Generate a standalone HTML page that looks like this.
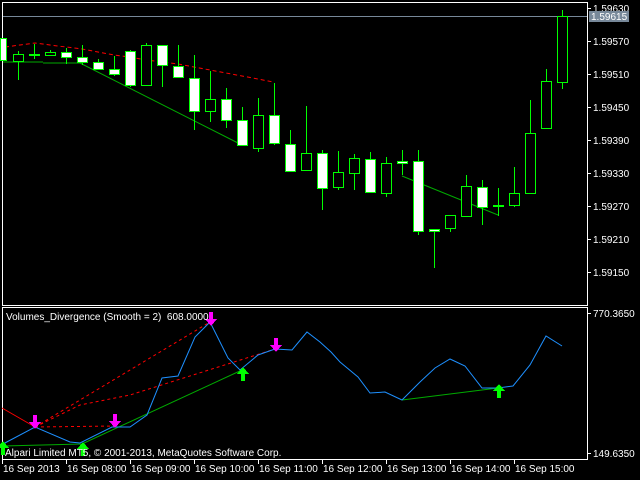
<!DOCTYPE html>
<html><head><meta charset="utf-8"><style>
html,body{margin:0;padding:0;background:#000;width:640px;height:480px;overflow:hidden}
svg{display:block}
text{font-family:"Liberation Sans",sans-serif;font-size:10px;fill:#fff}
</style></head><body>
<svg width="640" height="480" viewBox="0 0 640 480" xmlns="http://www.w3.org/2000/svg" shape-rendering="crispEdges">
<rect width="640" height="480" fill="#000"/>
<path d="M2.5 2.5H587.5V305.5H2.5Z M2.5 307.5H587.5V459.5H2.5Z" fill="none" stroke="#fff"/>
<line x1="3" y1="16.5" x2="587" y2="16.5" stroke="#778899"/>
<path d="M5 47 L20 45 L35 43 L50 45 L66 47 L82 49 L98 52 L114 55 L130 57 L146 60 L162 62 L178 64 L194 67 L210 70 L226 73 L242 76 L258 79 L273 82" fill="none" stroke="#f00" stroke-dasharray="4,3" shape-rendering="auto"/>
<path d="M3 62 L43 62 M43 63 L80 63 L238 143 M402 176 L498 215" fill="none" stroke="#0a0" shape-rendering="auto"/>
<g stroke="#00ff00" stroke-width="1">
<path d="M18.5 51V80 M34.5 44V59 M50.5 50V56 M66.5 48V64 M82.5 45V65 M98.5 59V62 M114.5 56V76 M130.5 50V87 M146.5 43V45 M162.5 45V87 M178.5 45V66 M194.5 55V130 M210.5 71V122 M226.5 88V128 M242.5 107V120 M258.5 98V152 M274.5 83V145 M290.5 130V144 M306.5 106V153 M322.5 150V210 M338.5 151V190 M354.5 154V190 M370.5 152V193 M386.5 157V197 M402.5 150V175 M418.5 150V235 M434.5 229V268 M450.5 228V232 M466.5 175V186 M482.5 180V225 M498.5 188V216 M514.5 167V207 M530.5 100V133 M546.5 69V81 M562.5 10V89"/>
</g>
<g stroke="#00ff00" stroke-width="1">
<rect x="0.5" y="38.5" width="6" height="22" fill="#fff"/>
<rect x="13.5" y="54.5" width="10" height="7" fill="#000"/>
<rect x="29.5" y="54.5" width="10" height="1" fill="#0f0"/>
<rect x="45.5" y="52.5" width="10" height="3" fill="#000"/>
<rect x="61.5" y="52.5" width="10" height="5" fill="#fff"/>
<rect x="77.5" y="57.5" width="10" height="5" fill="#fff"/>
<rect x="93.5" y="62.5" width="10" height="7" fill="#fff"/>
<rect x="109.5" y="69.5" width="10" height="5" fill="#fff"/>
<rect x="125.5" y="51.5" width="10" height="34" fill="#fff"/>
<rect x="141.5" y="45.5" width="10" height="40" fill="#000"/>
<rect x="157.5" y="45.5" width="10" height="20" fill="#fff"/>
<rect x="173.5" y="66.5" width="10" height="11" fill="#fff"/>
<rect x="189.5" y="78.5" width="10" height="33" fill="#fff"/>
<rect x="205.5" y="99.5" width="10" height="12" fill="#000"/>
<rect x="221.5" y="99.5" width="10" height="21" fill="#fff"/>
<rect x="237.5" y="120.5" width="10" height="25" fill="#fff"/>
<rect x="253.5" y="115.5" width="10" height="33" fill="#000"/>
<rect x="269.5" y="115.5" width="10" height="28" fill="#fff"/>
<rect x="285.5" y="144.5" width="10" height="27" fill="#fff"/>
<rect x="301.5" y="153.5" width="10" height="17" fill="#000"/>
<rect x="317.5" y="153.5" width="10" height="35" fill="#fff"/>
<rect x="333.5" y="172.5" width="10" height="15" fill="#000"/>
<rect x="349.5" y="158.5" width="10" height="15" fill="#000"/>
<rect x="365.5" y="159.5" width="10" height="33" fill="#fff"/>
<rect x="381.5" y="163.5" width="10" height="30" fill="#000"/>
<rect x="397.5" y="161.5" width="10" height="2" fill="#fff"/>
<rect x="413.5" y="161.5" width="10" height="70" fill="#fff"/>
<rect x="429.5" y="229.5" width="10" height="2" fill="#fff"/>
<rect x="445.5" y="215.5" width="10" height="13" fill="#000"/>
<rect x="461.5" y="186.5" width="10" height="30" fill="#000"/>
<rect x="477.5" y="187.5" width="10" height="20" fill="#fff"/>
<rect x="493.5" y="205.5" width="10" height="1" fill="#0f0"/>
<rect x="509.5" y="193.5" width="10" height="12" fill="#000"/>
<rect x="525.5" y="133.5" width="10" height="60" fill="#000"/>
<rect x="541.5" y="81.5" width="10" height="47" fill="#000"/>
<rect x="557.5" y="16.5" width="10" height="66" fill="#000"/>
</g>
<g stroke="#fff"><path d="M587 8.5h4 M587 41.5h4 M587 74.5h4 M587 107.5h4 M587 140.5h4 M587 173.5h4 M587 206.5h4 M587 239.5h4 M587 272.5h4 M587 313.5h4 M587 453.5h4"/></g>
<text x="593" y="12">1.59630</text>
<rect x="589" y="11" width="40" height="11" fill="#778899"/>
<text x="591" y="20">1.59615</text>
<text x="593" y="45">1.59570</text>
<text x="593" y="78">1.59510</text>
<text x="593" y="111">1.59450</text>
<text x="593" y="144">1.59390</text>
<text x="593" y="177">1.59330</text>
<text x="593" y="210">1.59270</text>
<text x="593" y="243">1.59210</text>
<text x="593" y="276">1.59150</text>
<text x="593" y="317">770.3650</text>
<text x="593" y="457">149.6350</text>
<g fill="none" shape-rendering="auto">
<path d="M2 408 L35 427" stroke="#f00"/>
<path d="M35 427 L210 322 M35 427 L115 426 M35 427 L80 405 L130 395 L275 349" stroke="#f00" stroke-dasharray="3,3"/>
<path d="M3 446 L82 444 L242 370 M402 400 L498 388" stroke="#0a0"/>
<path d="M3 444 L35 427 L70 442 L80 443 L112 427 L130 427 L147 415 L162 378 L178 376 L195 337 L210 322 L228 358 L240 370 L258 355 L275 349 L292 350 L307 332 L320 342 L331 352 L340 362 L358 377 L370 393 L385 392 L402 400 L420 382 L435 368 L450 359 L465 366 L482 388 L498 388 L513 386 L530 365 L546 336 L562 346" stroke="#1e90ff"/>
</g>
<defs>
<path id="dn" d="M-2 -9H2V-2H6L0 5L-6 -2H-2Z"/>
<path id="up" d="M-2 9H2V2H6L0 -5L-6 2H-2Z"/>
</defs>
<g fill="#ff00ff">
<use href="#dn" x="35" y="424"/><use href="#dn" x="115" y="423"/><use href="#dn" x="211" y="321"/><use href="#dn" x="276" y="347"/>
</g>
<g fill="#00ff00">
<use href="#up" x="3" y="446"/><use href="#up" x="83" y="447"/><use href="#up" x="243" y="372"/><use href="#up" x="499" y="389"/>
</g>
<text x="6" y="320" xml:space="preserve">Volumes_Divergence (Smooth = 2)  608.0000</text>
<text x="5" y="456">Alpari Limited MT5, © 2001-2013, MetaQuotes Software Corp.</text>
<g stroke="#fff"><path d="M2.5 460v4 M66.5 460v4 M130.5 460v4 M194.5 460v4 M258.5 460v4 M322.5 460v4 M386.5 460v4 M450.5 460v4 M514.5 460v4"/></g>
<text x="3" y="472">16 Sep 2013</text>
<text x="67" y="472">16 Sep 08:00</text>
<text x="131" y="472">16 Sep 09:00</text>
<text x="195" y="472">16 Sep 10:00</text>
<text x="259" y="472">16 Sep 11:00</text>
<text x="323" y="472">16 Sep 12:00</text>
<text x="387" y="472">16 Sep 13:00</text>
<text x="451" y="472">16 Sep 14:00</text>
<text x="515" y="472">16 Sep 15:00</text>
</svg>
</body></html>
